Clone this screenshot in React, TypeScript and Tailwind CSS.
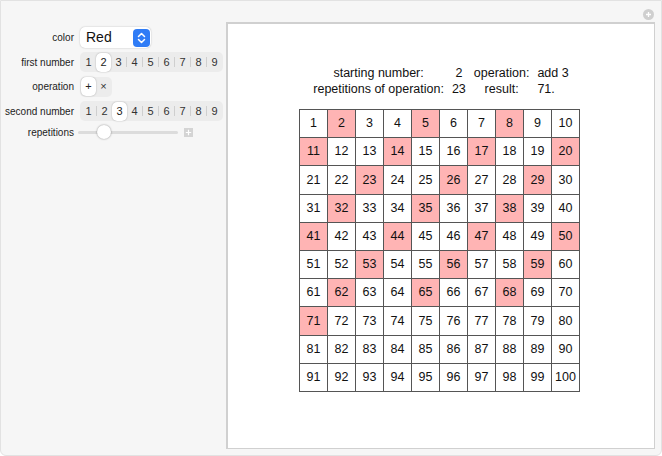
import { useState } from "react";

const digits = [1, 2, 3, 4, 5, 6, 7, 8, 9];

const Segmented = ({
  items,
  selected,
  onPick,
}: {
  items: string[];
  selected: number;
  onPick: (i: number) => void;
}) => (
  <div className="flex h-[20px] items-center rounded-[5px] bg-[#ececec] px-[1px]">
    {items.map((it, i) => (
      <div key={i} className="flex h-full items-center">
        {i > 0 && i !== selected && i - 1 !== selected && (
          <div className="h-[10px] w-px bg-[#cfcfcf]" />
        )}
        <button
          onClick={() => onPick(i)}
          className={
            i === selected
              ? "flex h-[19px] w-[15px] items-center justify-center rounded-[5px] bg-white text-[11px] text-[#222] shadow-[0_0_1.5px_rgba(0,0,0,0.35)]"
              : "flex h-[19px] w-[15px] items-center justify-center text-[11px] text-[#333]"
          }
        >
          {it}
        </button>
      </div>
    ))}
  </div>
);

const Label = ({ children }: { children: string }) => (
  <div className="w-[74px] shrink-0 pr-[1px] text-right text-[10px] text-[#222]">
    {children}
  </div>
);

const App = () => {
  const [first, setFirst] = useState(1);
  const [op, setOp] = useState(0);
  const [second, setSecond] = useState(2);
  const [reps] = useState(23);

  const start = first + 1;
  const step = second + 1;
  const hits = new Set<number>();
  let v = start;
  hits.add(v);
  for (let i = 0; i < reps; i++) {
    v = op === 0 ? v + step : v * step;
    if (v > 100) break;
    hits.add(v);
  }
  const result = op === 0 ? start + step * reps : v;

  return (
    <div
      className="relative flex h-[456px] w-[662px] overflow-hidden rounded-b-[6px] border border-[#e2e2e2] bg-[#f6f6f6]"
      style={{ fontFamily: "'Liberation Sans', Arial, sans-serif" }}
    >
      <div className="flex w-[225px] shrink-0 flex-col gap-[4px] pt-[26px]">
        <div className="flex h-[21px] items-center gap-[5px]">
          <Label>color</Label>
          <div className="flex h-[21px] w-[71px] items-center justify-between rounded-[5px] bg-white pl-[6px] pr-[1px] shadow-[0_0_1.5px_rgba(0,0,0,0.3)]">
            <span className="text-[14px] text-[#111]">Red</span>
            <div className="flex h-[18px] w-[17px] items-center justify-center rounded-[4px] bg-[#2f7cf6]">
              <svg width="9" height="12" viewBox="0 0 9 12" fill="none" stroke="white" strokeWidth="1.5" strokeLinecap="round" strokeLinejoin="round">
                <path d="M1.5 4.5 L4.5 1.5 L7.5 4.5" />
                <path d="M1.5 7.5 L4.5 10.5 L7.5 7.5" />
              </svg>
            </div>
          </div>
        </div>
        <div className="flex h-[20px] items-center gap-[5px]">
          <Label>first number</Label>
          <Segmented items={digits.map(String)} selected={first} onPick={setFirst} />
        </div>
        <div className="flex h-[21px] items-center gap-[5px]">
          <Label>operation</Label>
          <Segmented items={["+", "×"]} selected={op} onPick={setOp} />
        </div>
        <div className="flex h-[20px] items-center gap-[5px]">
          <Label>second number</Label>
          <Segmented items={digits.map(String)} selected={second} onPick={setSecond} />
        </div>
        <div className="-mt-[1px] flex h-[16px] items-center gap-[3px]">
          <Label>repetitions</Label>
          <div className="relative flex h-[14px] w-[100px] items-center">
            <div className="h-[3px] w-full rounded-full bg-[#dcdcdc]" />
            <div className="absolute left-[19px] top-0 h-[14px] w-[14px] rounded-full bg-white shadow-[0_0_2px_rgba(0,0,0,0.45)]" />
          </div>
          <svg width="9" height="9" viewBox="0 0 9 9" className="ml-[3px]">
            <rect width="9" height="9" fill="#d4d4d4" />
            <path d="M4.5 1.8 V7.2 M1.8 4.5 H7.2" stroke="white" strokeWidth="1.2" />
          </svg>
        </div>
      </div>

      <div className="mt-[21px] mb-[6px] flex w-[429px] flex-col items-center border-l-2 border-t-2 border-[#d0d0d0] border-r border-b bg-white">
        <div className="mt-[41px] grid grid-cols-[auto_auto_auto_auto] gap-x-[8px] text-[12.5px] leading-[16px] text-[#111]">
          <div className="text-center">starting number:</div>
          <div className="text-center">{start}</div>
          <div className="text-center">operation:</div>
          <div>
            {op === 0 ? "add" : "multiply by"} {step}
          </div>
          <div className="text-center">repetitions of operation:</div>
          <div className="text-center">{reps}</div>
          <div className="text-center">result:</div>
          <div>{result}.</div>
        </div>
        <div className="mt-[12px] -ml-[3px] grid grid-cols-[repeat(10,28px)] border-l border-t border-[#555]">
          {Array.from({ length: 100 }, (_, i) => i + 1).map((n) => (
            <div
              key={n}
              className={
                hits.has(n)
                  ? "flex h-[28.2px] items-center justify-center border-b border-r border-[#555] bg-[#ffb4b4] text-[12.5px] text-[#111]"
                  : "flex h-[28.2px] items-center justify-center border-b border-r border-[#555] bg-white text-[12.5px] text-[#111]"
              }
            >
              {n}
            </div>
          ))}
        </div>
      </div>

      <div className="absolute right-[7px] top-[8px] flex h-[11px] w-[11px] items-center justify-center rounded-full bg-[#cfcfcf]">
        <svg width="7" height="7" viewBox="0 0 7 7">
          <path d="M3.5 1 V6 M1 3.5 H6" stroke="white" strokeWidth="1.3" />
        </svg>
      </div>
    </div>
  );
};

export default App;
